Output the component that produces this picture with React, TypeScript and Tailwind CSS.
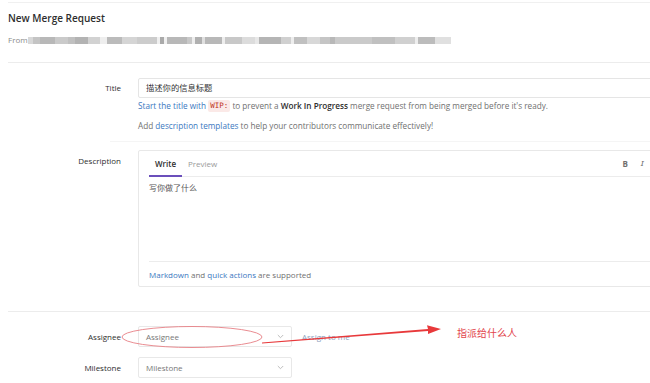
import React from "react";

const blur: [number, string][] = [
  [5, "#d8d8d8"], [7, "#c4c4c4"], [15, "#b8b8b8"], [13, "#cacaca"], [7, "#c0c0c0"], [13, "#b3b3b3"], [12, "#d2d2d2"], [7, "#eeeeee"],
  [15, "#bbbbbb"], [15, "#d5d5d5"], [20, "#cccccc"], [3, "#f0f0f0"], [4, "#aaaaaa"], [3, "#f0f0f0"], [20, "#b8b8b8"], [5, "#c8c8c8"],
  [3, "#eeeeee"], [7, "#b0b0b0"], [3, "#e0e0e0"], [17, "#b8b8b8"], [3, "#eeeeee"], [17, "#c8c8c8"], [13, "#dcdcdc"], [4, "#e8e8e8"],
  [22, "#b5b5b5"], [10, "#d0d0d0"], [3, "#eeeeee"], [13, "#c0c0c0"], [13, "#d8d8d8"], [10, "#c5c5c5"], [5, "#b8b8b8"], [37, "#cacaca"],
  [23, "#c0c0c0"], [20, "#d0d0d0"], [3, "#eeeeee"], [17, "#bcbcbc"], [16, "#e0e0e0"],
];

function Chevron() {
  return (
    <svg width="7" height="5" viewBox="0 0 7 5" className="shrink-0">
      <path d="M0.8 1 L3.5 3.7 L6.2 1" fill="none" stroke="#b5b5b5" strokeWidth="0.9" />
    </svg>
  );
}

export default function App() {
  return (
    <div
      className="relative w-[650px] h-[383px] overflow-hidden bg-white text-[#2e2e2e]"
      style={{ fontFamily: '"Open Sans", "Noto Sans CJK SC", sans-serif' }}
    >
      <div className="w-[680px]">
        <div className="mt-[2px] ml-2 border-t border-[#f0f0f0]" />
        <div className="mt-[5px] ml-2 h-[20px] flex items-center text-[10px] font-semibold text-[#2e2e2e]">
          New Merge Request
        </div>
        <div className="mt-[5px] ml-2 h-[14px] flex items-center text-[8px] text-[#8a8a8a]">
          <span>From</span>
          <div className="flex h-[7px] blur-[0.7px]">
            {blur.map(([w, c], i) => (
              <div key={i} style={{ width: w, background: c }} className="h-full" />
            ))}
          </div>
        </div>
        <div className="mt-[15px] ml-2 border-t border-[#ececec]" />

        {/* Title */}
        <div className="mt-[15px] ml-2 flex">
          <div className="w-[113px] h-[20px] flex items-center justify-end text-[8px] text-[#2e2e2e]">Title</div>
          <div className="ml-[17px] flex-1">
            <div className="h-[20px] border border-[#e5e5e5] rounded-[2px] flex items-center pl-[7px] text-[8.3px] text-[#333]">
              描述你的信息标题
            </div>
            <div className="mt-[1px] h-[14px] flex items-center text-[8.2px] text-[#707070] whitespace-pre">
              <span className="text-[#3b78c0]">Start the title with </span>
              <span
                className="bg-[#fbe9e7] text-[#c0341d] px-[2px] rounded-[2px] text-[7.5px]"
                style={{ fontFamily: '"DejaVu Sans Mono", monospace' }}
              >
                WIP:
              </span>
              <span> to prevent a </span>
              <span className="font-semibold text-[#2e2e2e]">Work In Progress</span>
              <span> merge request from being merged before it's ready.</span>
            </div>
            <div className="mt-[6px] h-[14px] flex items-center text-[8.2px] text-[#707070] whitespace-pre">
              <span>Add </span>
              <span className="text-[#3b78c0]">description templates</span>
              <span> to help your contributors communicate effectively!</span>
            </div>
          </div>
        </div>
        <div className="mt-[8px] ml-[110px] border-t border-[#f5f5f5]" />

        {/* Description */}
        <div className="mt-[8px] ml-2 flex">
          <div className="w-[113px] h-[22px] flex items-center justify-end text-[8px] text-[#2e2e2e]">Description</div>
          <div className="ml-[17px] flex-1 h-[137px] border border-[#e8e8e8] rounded-[2px] flex flex-col">
            <div className="h-[26px] mx-[10px] border-b border-[#ececec] flex items-stretch text-[8px]">
              <div className="w-[33px] flex items-center justify-center font-semibold text-[#2e2e2e] border-b-2 border-[#6b4fbb] mb-[-1px] pt-[2px]">
                Write
              </div>
              <div className="ml-[6px] flex items-center text-[#9a9a9a] pt-[1px]">Preview</div>
              <div className="flex-1" />
              <div className="flex items-center gap-[13px] text-[8px] text-[#707070] pr-[25px]">
                <span className="font-bold">B</span>
                <span className="italic" style={{ fontFamily: '"DejaVu Serif", serif' }}>I</span>
              </div>
            </div>
            <div className="flex-1 px-[10px] pt-[5px] text-[8px] text-[#555]">写你做了什么</div>
            <div className="h-[25px] mx-[10px] border-t border-[#ececec] flex items-center pt-[2px] text-[8px] text-[#707070] whitespace-pre">
              <span className="text-[#3b78c0]">Markdown</span>
              <span> and </span>
              <span className="text-[#3b78c0]">quick actions</span>
              <span> are supported</span>
            </div>
          </div>
        </div>

        <div className="mt-[24px] ml-2 border-t border-[#ececec]" />

        {/* Assignee */}
        <div className="mt-[14px] ml-2 flex items-center">
          <div className="w-[113px] h-[21px] flex items-center justify-end text-[8px] text-[#2e2e2e]">Assignee</div>
          <div className="ml-[17px] w-[154px] h-[21px] border border-[#e8e8e8] rounded-[2px] flex items-center justify-between pl-[7px] pr-[7px] text-[8px] text-[#777]">
            <span>Assignee</span>
            <Chevron />
          </div>
          <div className="ml-[10px] text-[8px] text-[#8aa0bd]">Assign to me</div>
        </div>

        {/* Milestone */}
        <div className="mt-[10px] ml-2 flex items-center">
          <div className="w-[113px] h-[21px] flex items-center justify-end text-[8px] text-[#2e2e2e]">Milestone</div>
          <div className="ml-[17px] w-[154px] h-[21px] border border-[#e8e8e8] rounded-[2px] flex items-center justify-between pl-[7px] pr-[7px] text-[8px] text-[#777]">
            <span>Milestone</span>
            <Chevron />
          </div>
        </div>
      </div>

      {/* annotation overlay */}
      <svg className="absolute left-0 top-0 pointer-events-none" width="650" height="383">
        <ellipse cx="192" cy="337" rx="70" ry="10.5" fill="none" stroke="#e77f84" strokeWidth="0.9" />
        <polygon
          points="262,342.4 428,328.9 427,325.3 441,329 428,334 428,331.1 262,343.6"
          fill="#e8393b"
        />
      </svg>
      <div
        className="absolute left-[457px] top-[325px] text-[10px] text-[#e2454c]"
        style={{ fontFamily: '"Noto Sans CJK SC", sans-serif' }}
      >
        指派给什么人
      </div>
    </div>
  );
}
